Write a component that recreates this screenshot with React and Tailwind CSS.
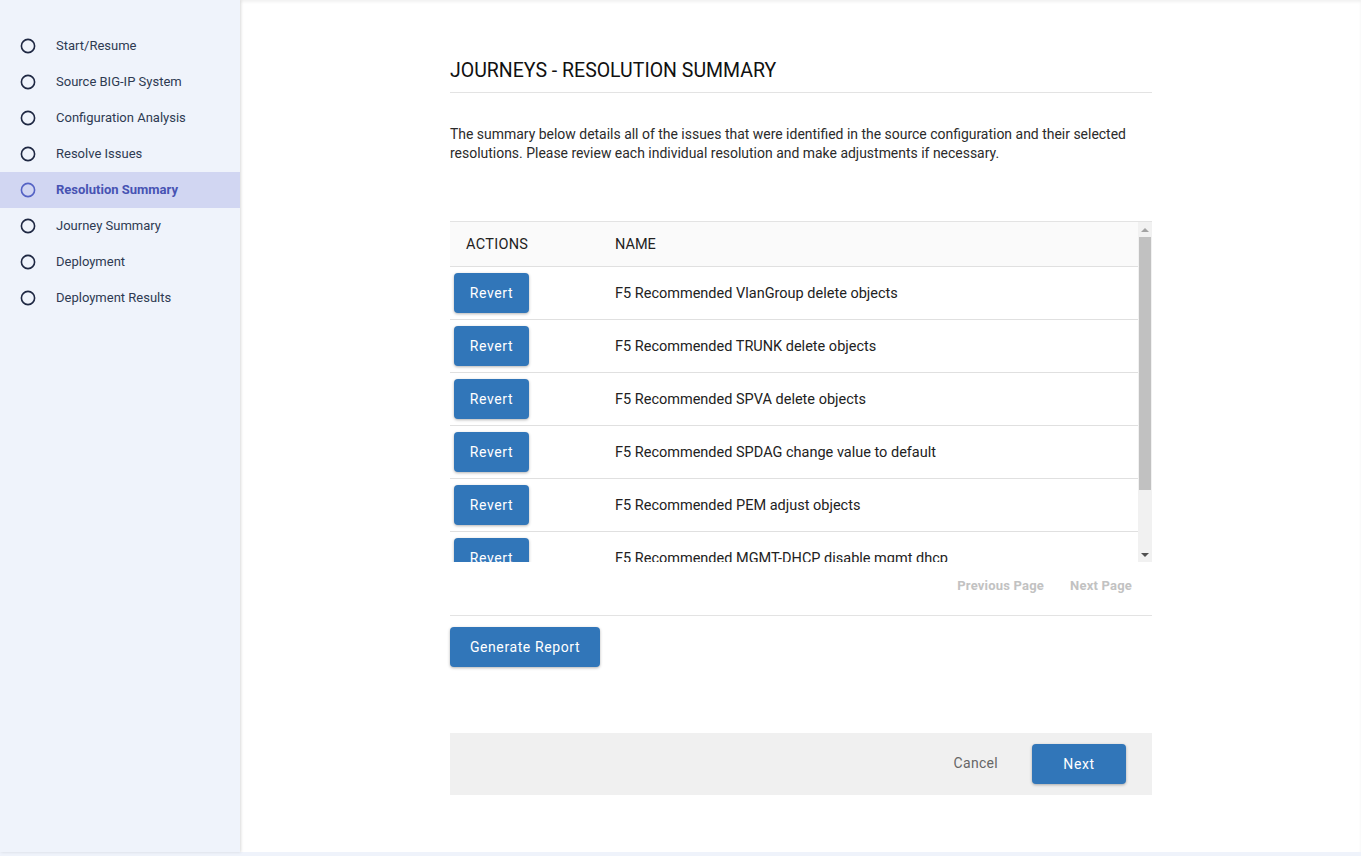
import React from 'react';

const steps = [
  'Start/Resume',
  'Source BIG-IP System',
  'Configuration Analysis',
  'Resolve Issues',
  'Resolution Summary',
  'Journey Summary',
  'Deployment',
  'Deployment Results',
];

const ACTIVE_STEP = 'Resolution Summary';

const resolutions = [
  'F5 Recommended VlanGroup delete objects',
  'F5 Recommended TRUNK delete objects',
  'F5 Recommended SPVA delete objects',
  'F5 Recommended SPDAG change value to default',
  'F5 Recommended PEM adjust objects',
  'F5 Recommended MGMT-DHCP disable mgmt dhcp',
  'F5 Recommended HTTP-PROFILE adjust objects',
];

function StepCircle({ active }) {
  return (
    <svg width="16" height="16" viewBox="0 0 16 16" className="shrink-0">
      <circle cx="8" cy="8" r="6.6" fill="none" stroke={active ? '#5462c4' : '#1e2742'} strokeWidth="1.6" />
    </svg>
  );
}

function Sidebar() {
  return (
    <aside className="w-[240px] shrink-0 bg-[#eff3fb] shadow-[1px_0_3px_rgba(0,0,0,0.12)] z-10 pt-[28px]">
      {steps.map((step) => {
        const active = step === ACTIVE_STEP;
        return (
          <div
            key={step}
            className={
              'flex items-center h-[36px] pl-[20px] ' +
              (active ? 'bg-[#d1d6f2] text-[#4753b3] font-bold' : 'text-[#2e3a52]')
            }
          >
            <StepCircle active={active} />
            <span className="ml-[20px] text-[13px]">{step}</span>
          </div>
        );
      })}
    </aside>
  );
}

function BlueButton({ children, className = '' }) {
  return (
    <button
      className={
        'h-[40px] rounded-[4px] bg-[#3176b9] text-white text-[14px] tracking-[0.6px] shadow-[0_1px_3px_rgba(0,0,0,0.3)] ' +
        className
      }
    >
      {children}
    </button>
  );
}

function FakeScrollbar() {
  return (
    <div className="w-[14px] shrink-0 bg-[#f1f1f1] flex flex-col items-center">
      <div className="h-[15px] flex items-center justify-center">
        <div className="w-0 h-0 border-l-[4px] border-r-[4px] border-b-[4px] border-l-transparent border-r-transparent border-b-[#a3a3a3]" />
      </div>
      <div className="w-[12px] h-[253px] bg-[#c1c1c1]" />
      <div className="flex-1" />
      <div className="h-[15px] flex items-center justify-center">
        <div className="w-0 h-0 border-l-[4px] border-r-[4px] border-t-[4px] border-l-transparent border-r-transparent border-t-[#505050]" />
      </div>
    </div>
  );
}

function ResolutionTable() {
  return (
    <div className="mt-[58px] border-t border-[#e3e3e3] flex h-[341px]">
      <div className="flex-1 overflow-hidden">
        <div className="flex items-center h-[45px] bg-[#fafafa] border-b border-[#e0e0e0] text-[14.5px] text-[#222] pt-[2px]">
          <div className="w-[165px] pl-[16px] tracking-[0.3px]">ACTIONS</div>
          <div>NAME</div>
        </div>
        {resolutions.map((name) => (
          <div key={name} className="flex items-center h-[53px] border-b border-[#e0e0e0]">
            <div className="w-[165px] pl-[4px]">
              <BlueButton className="w-[75px]">Revert</BlueButton>
            </div>
            <div className="text-[14.5px] text-[#222] pt-[2px]">{name}</div>
          </div>
        ))}
      </div>
      <FakeScrollbar />
    </div>
  );
}

export default function App() {
  return (
    <div className="min-h-[856px] bg-[#eff3fb]" style={{ fontFamily: 'Roboto, "Liberation Sans", sans-serif' }}>
      <div className="flex h-[852px]">
        <Sidebar />
        <main className="flex-1 bg-white shadow-[inset_0_2px_3px_rgba(0,0,0,0.06)] pl-[210px]">
          <div className="w-[702px] pt-[58px]">
            <h1 className="text-[19.5px] leading-[24px] text-[#111] pt-[1px] pb-[9px] border-b border-[#e3e3e3]">
              JOURNEYS - RESOLUTION SUMMARY
            </h1>
            <p className="mt-[32px] text-[13.96px] leading-[19px] text-[#2b2b2b]">
              The summary below details all of the issues that were identified in the source configuration and their selected
              resolutions. Please review each individual resolution and make adjustments if necessary.
            </p>

            <ResolutionTable />

            <div className="h-[54px] border-b border-[#e3e3e3] flex justify-end items-start pt-[14px] pr-[20px] gap-[26px] text-[13px] font-bold text-[#c2c2c2] tracking-[0.2px]">
              <button>Previous Page</button>
              <button>Next Page</button>
            </div>

            <BlueButton className="mt-[11px] w-[150px]">Generate Report</BlueButton>

            <div className="mt-[66px] h-[62px] bg-[#f0f0f0] flex items-center justify-end pr-[26px]">
              <button className="px-[16px] h-[40px] text-[14px] text-[#666] tracking-[0.3px] mr-[18px] -mt-[2px]">Cancel</button>
              <BlueButton className="w-[94px]">Next</BlueButton>
            </div>
          </div>
        </main>
      </div>
    </div>
  );
}
